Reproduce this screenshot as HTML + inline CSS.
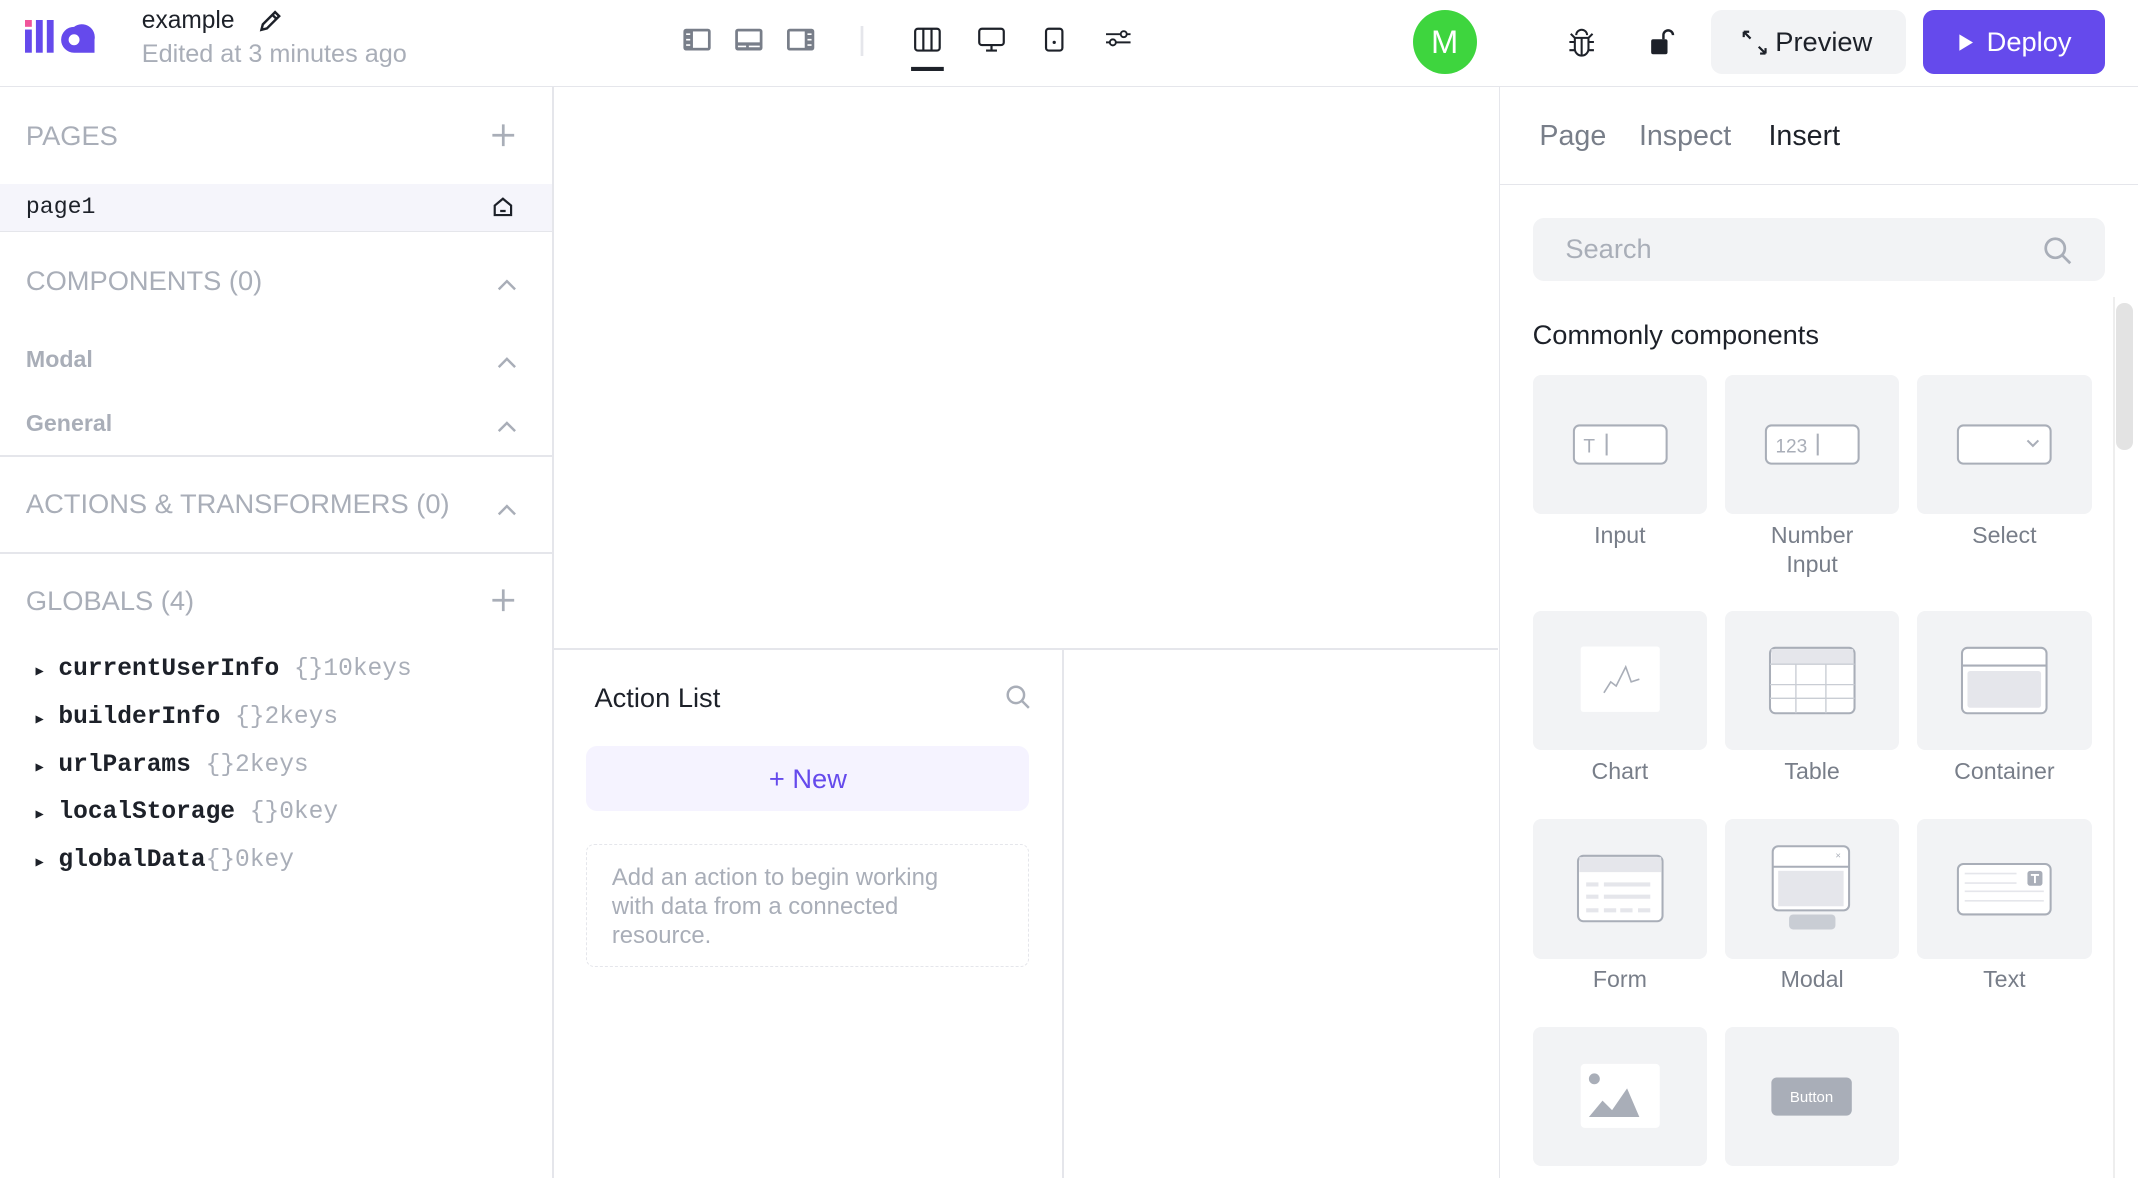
<!DOCTYPE html>
<html><head><meta charset="utf-8"><style>
*{box-sizing:border-box;margin:0;padding:0}
html,body{width:2138px;height:1178px;overflow:hidden;background:#fff}
#r{width:1568px;height:864px;zoom:1.363520;position:relative;font-family:"Liberation Sans",sans-serif;color:#1d2129}
.a{position:absolute}
.g{color:#a9aeb8}
.mono{font-family:"Liberation Mono",monospace}
.card{position:absolute;width:128px;height:102px;background:#f2f3f5;border-radius:6px}
.lbl{position:absolute;width:128px;text-align:center;font-size:17px;color:#787e89;line-height:21px}
.hl{position:absolute;background:#e5e6eb}
.gl div{height:35px;line-height:35px;white-space:nowrap}
</style></head><body><div id="r">
<!-- header -->
<div class="hl" style="left:0;top:63px;width:1568px;height:1px"></div>
<svg class="a" style="left:18px;top:15px" width="52" height="26" viewBox="0 0 52 26">
<rect x="0" y="0" width="5" height="5" fill="#f0549a"/><rect x="0" y="7" width="5" height="17" fill="#654aec"/>
<rect x="8" y="0" width="5" height="24" fill="#654aec"/><rect x="16" y="0" width="5" height="24" fill="#654aec"/>
<path d="M36 5a9.5 9.5 0 1 0 0 19h15V14.5A9.5 9.5 0 0 0 36 5z M36 10.5a4 4 0 1 1 0 8a4 4 0 0 1 0-8z" fill="#654aec" fill-rule="evenodd"/>
</svg>
<div class="a" style="left:104px;top:5px;font-size:18px">example</div>
<svg class="a" style="left:188px;top:6px" width="20" height="20" viewBox="0 0 20 20"><path d="M4 16l1-4 9-9 3 3-9 9z M12 5l3 3" fill="none" stroke="#1d2129" stroke-width="1.8"/></svg>
<div class="a g" style="left:104px;top:29px;font-size:18.5px">Edited at 3 minutes ago</div>
<svg class="a" style="left:500px;top:19px" width="340" height="36" viewBox="0 0 340 36">
<rect x="1" y="2" width="20" height="16" rx="2" fill="#787e89"/><rect x="8" y="4" width="11" height="12" fill="#fff"/><path d="M3 6h3M3 10h3M3 14h3" stroke="#fff" stroke-width="1.2"/>
<rect x="39" y="2" width="20" height="16" rx="2" fill="#787e89"/><rect x="41" y="4" width="16" height="8" fill="#fff"/><path d="M41 15h6M49 15h8" stroke="#fff" stroke-width="1.2"/>
<rect x="77" y="2" width="20" height="16" rx="2" fill="#787e89"/><rect x="79" y="4" width="11" height="12" fill="#fff"/><path d="M92 6h3M92 10h3M92 14h3" stroke="#fff" stroke-width="1.2"/>
<rect x="131" y="0" width="2" height="22" fill="#e5e6eb"/>
<rect x="171" y="2" width="18" height="16" rx="2" fill="none" stroke="#1d2129" stroke-width="1.6"/><path d="M177 2v16M183 2v16" stroke="#1d2129" stroke-width="1.6"/>
<rect x="168" y="30" width="24" height="3" fill="#1d2129"/>
<rect x="218" y="2" width="18" height="12" rx="2" fill="none" stroke="#1d2129" stroke-width="1.6"/><path d="M227 14v4M223 18h8" stroke="#1d2129" stroke-width="1.6"/>
<rect x="267" y="2" width="12" height="16" rx="2" fill="none" stroke="#1d2129" stroke-width="1.6"/><circle cx="273" cy="12" r="1.2" fill="#1d2129"/>
<path d="M311 6h18M311 12h18" stroke="#1d2129" stroke-width="1.4"/><circle cx="324" cy="6" r="2.2" fill="#fff" stroke="#1d2129" stroke-width="1.4"/><circle cx="316" cy="12" r="2.2" fill="#fff" stroke="#1d2129" stroke-width="1.4"/>
</svg>
<div class="a" style="left:1036px;top:7px;width:47px;height:47px;border-radius:50%;background:#3ed53e;color:#fff;font-size:24px;text-align:center;line-height:47px">M</div>
<svg class="a" style="left:1150px;top:20px" width="80" height="22" viewBox="0 0 80 22">
<path d="M6 6a4 4 0 0 1 8 0M5 8h10v8a5 5 0 0 1-10 0z M10 8v13M1 11h4M15 11h4M1 17h4M15 17h4M2 5l3 3M18 5l-3 3" fill="none" stroke="#1d2129" stroke-width="1.5"/>
<rect x="61" y="9" width="12" height="11" rx="1.5" fill="#1d2129"/><path d="M70 9V6a3.5 3.5 0 0 1 7 0" fill="none" stroke="#1d2129" stroke-width="1.8"/>
</svg>
<div class="a" style="left:1255px;top:7px;width:143px;height:47px;border-radius:8px;background:#f2f3f5;font-size:20px;line-height:47px;padding-left:68px;">
<svg class="a" style="left:22px;top:14px" width="20" height="20" viewBox="0 0 20 20"><path d="M2 2l5 5M2 2v4M2 2h4M18 18l-5-5M18 18v-4M18 18h-4" fill="none" stroke="#1d2129" stroke-width="1.6"/></svg><span style="position:absolute;left:47px">Preview</span></div>
<div class="a" style="left:1410px;top:7px;width:134px;height:47px;border-radius:8px;background:#654aec;color:#fff;font-size:20px;line-height:47px">
<svg class="a" style="left:26px;top:17px" width="12" height="14" viewBox="0 0 12 14"><path d="M1 1l10 6-10 6z" fill="#fff"/></svg><span style="position:absolute;left:47px">Deploy</span></div>
<!-- left panel -->
<div class="hl" style="left:405px;top:64px;width:1px;height:800px"></div>
<div class="a g" style="left:19px;top:88px;font-size:20px">PAGES</div>
<svg class="a" style="left:360px;top:90px" width="18" height="18"><path d="M9 1v16M1 9h16" stroke="#a9aeb8" stroke-width="2"/></svg>
<div class="a" style="left:0;top:135px;width:405px;height:35px;background:#f5f5fb;border-bottom:1px solid #e5e6eb"></div>
<div class="a mono" style="left:19px;top:142px;font-size:17px">page1</div>
<svg class="a" style="left:361px;top:144px" width="16" height="16" viewBox="0 0 16 16"><path d="M2 7l6-5 6 5v7H2z M6 11h4" fill="none" stroke="#1d2129" stroke-width="1.6"/></svg>
<div class="a g" style="left:19px;top:194px;font-size:20px">COMPONENTS (0)</div>
<div class="a g" style="left:19px;top:254px;font-size:17px;font-weight:bold">Modal</div>
<div class="a g" style="left:19px;top:301px;font-size:17px;font-weight:bold">General</div>
<svg class="a" style="left:364px;top:200px" width="16" height="180"><path d="M2 12l6-6 6 6M2 69l6-6 6 6M2 116l6-6 6 6M2 177l6-6 6 6" fill="none" stroke="#a9aeb8" stroke-width="1.8"/></svg>
<div class="hl" style="left:0;top:334px;width:405px;height:1px"></div>
<div class="a g" style="left:19px;top:358px;font-size:20px">ACTIONS &amp; TRANSFORMERS (0)</div>
<div class="hl" style="left:0;top:405px;width:405px;height:1px"></div>
<div class="a g" style="left:19px;top:429px;font-size:20px">GLOBALS (4)</div>
<svg class="a" style="left:360px;top:431px" width="18" height="18"><path d="M9 1v16M1 9h16" stroke="#a9aeb8" stroke-width="2"/></svg>
<div class="a mono gl" style="left:26px;top:474px;font-size:18px">
<div><span style="font-size:10px">▶</span> <b>currentUserInfo</b> <span class="g">{}10keys</span></div>
<div><span style="font-size:10px">▶</span> <b>builderInfo</b> <span class="g">{}2keys</span></div>
<div><span style="font-size:10px">▶</span> <b>urlParams</b> <span class="g">{}2keys</span></div>
<div><span style="font-size:10px">▶</span> <b>localStorage</b> <span class="g">{}0key</span></div>
<div><span style="font-size:10px">▶</span> <b>globalData</b><span class="g">{}0key</span></div>
</div>
<!-- center -->
<div class="hl" style="left:406px;top:475px;width:693px;height:2px"></div>
<div class="hl" style="left:779px;top:477px;width:1px;height:387px"></div>
<div class="a" style="left:436px;top:500px;font-size:20px">Action List</div>
<svg class="a" style="left:737px;top:502px" width="19" height="19" viewBox="0 0 19 19"><circle cx="8" cy="8" r="6" fill="none" stroke="#a9aeb8" stroke-width="1.8"/><path d="M12.5 12.5l5 5" stroke="#a9aeb8" stroke-width="1.8"/></svg>
<div class="a" style="left:430px;top:547px;width:325px;height:48px;border-radius:8px;background:#f5f3ff;color:#654aec;font-size:20px;text-align:center;line-height:48px">+ New</div>
<div class="a" style="left:430px;top:619px;width:325px;height:90px;border:1px dashed #e5e6eb;border-radius:6px;padding:13px 40px 13px 18px;color:#a9aeb8;font-size:17.5px;line-height:21.5px">Add an action to begin working with data from a connected resource.</div>
<!-- right panel -->
<div class="hl" style="left:1099px;top:64px;width:1px;height:800px"></div>
<div class="a" style="left:1129px;top:88px;font-size:21px;color:#787e89">Page</div>
<div class="a" style="left:1202px;top:88px;font-size:21px;color:#787e89">Inspect</div>
<div class="a" style="left:1297px;top:88px;font-size:21px">Insert</div>
<div class="hl" style="left:1100px;top:135px;width:468px;height:1px"></div>
<div class="a" style="left:1124px;top:160px;width:420px;height:46px;border-radius:8px;background:#f2f3f5;color:#a9aeb8;font-size:20px;line-height:46px;padding-left:24px">Search</div>
<svg class="a" style="left:1498px;top:173px" width="22" height="22" viewBox="0 0 22 22"><circle cx="9" cy="9" r="7" fill="none" stroke="#a9aeb8" stroke-width="2"/><path d="M14 14l6 6" stroke="#a9aeb8" stroke-width="2"/></svg>
<div class="a" style="left:1124px;top:234px;font-size:20px">Commonly components</div>
<div class="a" style="left:1550px;top:218px;width:1px;height:646px;background:#eee"></div>
<div class="a" style="left:1552px;top:222px;width:12px;height:108px;border-radius:6px;background:#e3e3e3"></div>

<div class="card" style="left:1124px;top:275px"><svg width="128" height="102"><rect x="30" y="37" width="68" height="28" rx="4" fill="#fff" stroke="#a9aeb8" stroke-width="1.5"/><text x="37" y="57" font-size="14" fill="#a9aeb8" font-family="Liberation Sans">T</text><path d="M54 43v16" stroke="#a9aeb8" stroke-width="1.5"/></svg></div>
<div class="card" style="left:1265px;top:275px"><svg width="128" height="102"><rect x="30" y="37" width="68" height="28" rx="4" fill="#fff" stroke="#a9aeb8" stroke-width="1.5"/><text x="37" y="57" font-size="14" fill="#a9aeb8" font-family="Liberation Sans">123</text><path d="M68 43v16" stroke="#a9aeb8" stroke-width="1.5"/></svg></div>
<div class="card" style="left:1406px;top:275px"><svg width="128" height="102"><rect x="30" y="37" width="68" height="28" rx="4" fill="#fff" stroke="#a9aeb8" stroke-width="1.5"/><path d="M81 48l4 4 4-4" fill="none" stroke="#a9aeb8" stroke-width="1.5"/></svg></div>
<div class="lbl" style="left:1124px;top:382px">Input</div>
<div class="lbl" style="left:1265px;top:382px">Number<br>Input</div>
<div class="lbl" style="left:1406px;top:382px">Select</div>

<div class="card" style="left:1124px;top:448px"><svg width="128" height="102"><rect x="35" y="26" width="58" height="48" rx="2" fill="#fff"/><polyline points="52,60 57,52 61,55 68,41 72,52 78,50" fill="none" stroke="#a9aeb8" stroke-width="1.2"/></svg></div>
<div class="card" style="left:1265px;top:448px"><svg width="128" height="102"><rect x="33" y="27" width="62" height="48" rx="4" fill="#fff" stroke="#a9aeb8" stroke-width="1.5"/><path d="M34 28h60v11H34z" fill="#e5e6eb"/><path d="M33 39h62M33 54h62M33 64h62M52 39v36M74 39v36" stroke="#c9cdd4" stroke-width="1"/></svg></div>
<div class="card" style="left:1406px;top:448px"><svg width="128" height="102"><rect x="33" y="27" width="62" height="48" rx="4" fill="#fff" stroke="#a9aeb8" stroke-width="1.5"/><path d="M33 40h62" stroke="#a9aeb8" stroke-width="1.5"/><rect x="37" y="44" width="54" height="27" rx="2" fill="#e5e6eb"/></svg></div>
<div class="lbl" style="left:1124px;top:555px">Chart</div>
<div class="lbl" style="left:1265px;top:555px">Table</div>
<div class="lbl" style="left:1406px;top:555px">Container</div>

<div class="card" style="left:1124px;top:601px"><svg width="128" height="102"><rect x="33" y="27" width="62" height="48" rx="4" fill="#fff" stroke="#a9aeb8" stroke-width="1.5"/><path d="M34 28h60v11H34z" fill="#e5e6eb"/><path d="M39 48h9M52 48h34M39 57h9M52 57h34M39 67h9M52 67h9M64 67h9M77 67h9" stroke="#e5e6eb" stroke-width="3"/></svg></div>
<div class="card" style="left:1265px;top:601px"><svg width="128" height="102"><rect x="35" y="20" width="56" height="47" rx="4" fill="#fff" stroke="#a9aeb8" stroke-width="1.5"/><path d="M35 35h56" stroke="#a9aeb8" stroke-width="1.5"/><rect x="39" y="38" width="48" height="26" fill="#e5e6eb"/><text x="81" y="29" font-size="7" fill="#a9aeb8">×</text><rect x="47" y="70" width="34" height="11" rx="3" fill="#c9cdd4"/></svg></div>
<div class="card" style="left:1406px;top:601px"><svg width="128" height="102"><rect x="30" y="33" width="68" height="37" rx="4" fill="#fff" stroke="#a9aeb8" stroke-width="1.5"/><path d="M35 40h38M35 47h38M35 53h58M35 60h58" stroke="#e5e6eb" stroke-width="1.2"/><rect x="81" y="38" width="11" height="11" rx="2" fill="#a9aeb8"/><path d="M83.5 41h6M86.5 41v6" stroke="#fff" stroke-width="1.4"/></svg></div>
<div class="lbl" style="left:1124px;top:708px">Form</div>
<div class="lbl" style="left:1265px;top:708px">Modal</div>
<div class="lbl" style="left:1406px;top:708px">Text</div>

<div class="card" style="left:1124px;top:753px"><svg width="128" height="102"><rect x="35" y="27" width="58" height="47" rx="3" fill="#fff"/><circle cx="45" cy="38" r="4" fill="#a9aeb8"/><path d="M41 66l10-12 7 7 11-16 9 21z" fill="#a9aeb8"/></svg></div>
<div class="card" style="left:1265px;top:753px"><svg width="128" height="102"><rect x="34" y="37" width="59" height="28" rx="4" fill="#a9aeb8"/><text x="63.5" y="55" font-size="11" fill="#fff" text-anchor="middle" font-family="Liberation Sans">Button</text></svg></div>
</div></body></html>
